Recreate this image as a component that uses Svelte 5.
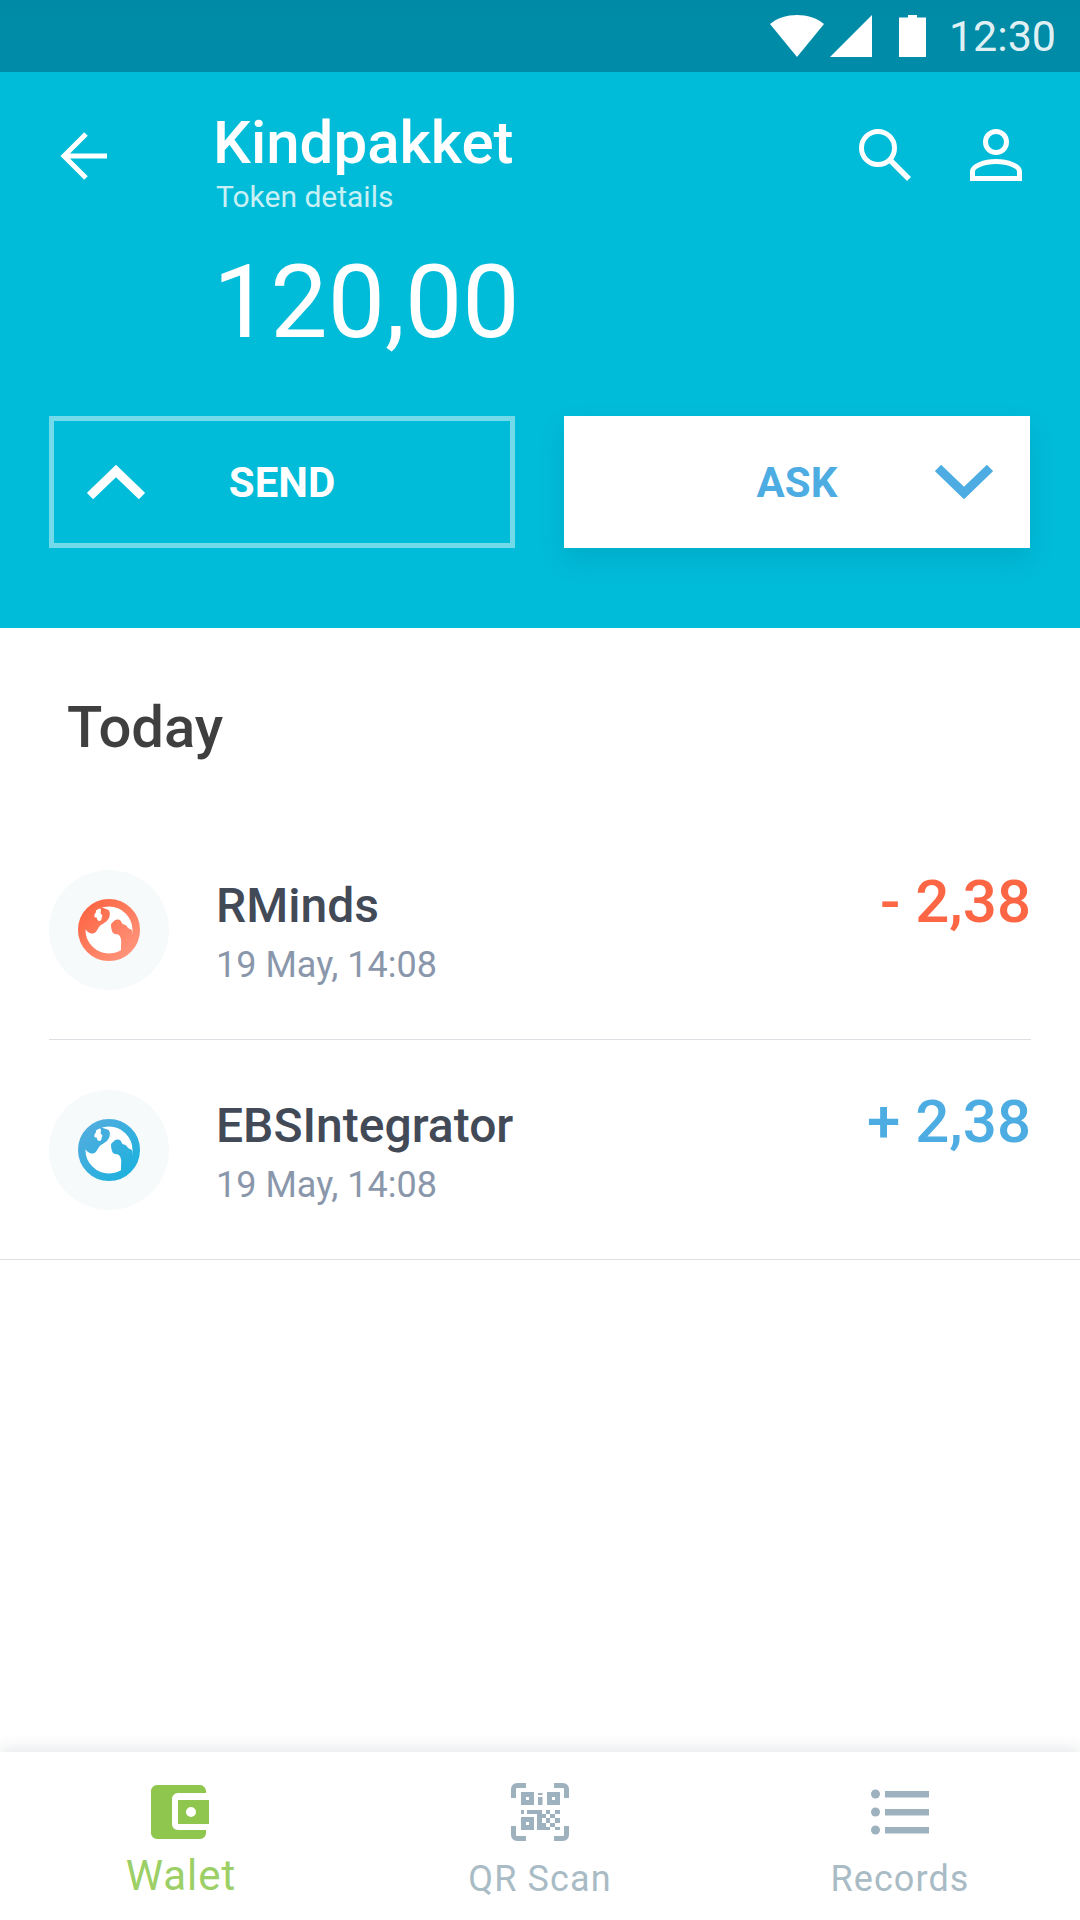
<script>
	const rows = [
		{ id: 'coral', name: 'RMinds', date: '19 May, 14:08', amount: '- 2,38', from: '#fc6644', to: '#ff937a', inset: true },
		{ id: 'blue', name: 'EBSIntegrator', date: '19 May, 14:08', amount: '+ 2,38', from: '#50addf', to: '#1fb1dd', inset: false }
	];

	// qr modules, x y w h
	const qrBits = [
		[27, 14, 4.500, 8], [27, 10, 4.500, 2],
		[10, 27, 3, 4], [16, 27, 15, 4], [35, 27, 4, 4], [44, 27, 5, 4],
		[26, 31, 9, 4], [39, 31, 5, 4],
		[26, 35, 5, 5], [35, 35, 4, 5], [44, 35, 5, 5],
		[26, 40, 9, 4], [39, 40, 5, 4],
		[26, 44, 13, 3], [44, 44, 5, 3]
	];
</script>

{#snippet globe(id, from, to)}
	<svg class="globe" viewBox="0 0 62 62">
		<defs>
			<linearGradient id="grad-{id}" gradientUnits="userSpaceOnUse" x1="8" y1="8" x2="52" y2="54">
				<stop offset="0" stop-color={from} />
				<stop offset="1" stop-color={to} />
			</linearGradient>
		</defs>
		<circle cx="31" cy="31" r="24" fill="#fff" />
		<path
			fill="url(#grad-{id})"
			d="M7 30C9 32 11 35 15 34.500C18 34 19 31 21 28C23 25 28 24 30 20.500C32 18 32.500 14 31 11.500C29 10 27 9.500 25 9L20 7L10 13L6 24Z"
		/>
		<path
			fill="#fff"
			d="M18.500 9.500C21 8.500 23.500 9.500 23 12C22 14 23 15 24.500 16.500L23.500 19C24 21.500 21.500 23 19.500 21C18.500 19 19.500 18.500 17.500 18.500C15.500 18 16.500 15 17.500 14C18.500 13 17.500 11 18.500 9.500Z"
		/>
		<path
			fill="url(#grad-{id})"
			d="M33 26.500C33 23.500 35 23.500 36 22C38 20 41 20 42.500 21.500C44 23.500 43.500 25 46 25.500C48 26 49 27 50 29C51 30 53 30 54 31.500L54 40L47 52L43 53L43 47C43.500 42 43.500 37.500 40 35.500C37 35 35 35 34 32C33.500 30 33 28 33 26.500Z"
		/>
		<circle cx="31" cy="31" r="27.250" fill="none" stroke="url(#grad-{id})" stroke-width="7.500" />
	</svg>
{/snippet}

<div class="screen">
	<header class="header">
		<div class="statusbar">
			<svg class="wifi" viewBox="0 0 54 42"><path d="M27 42L0 9C7 3 17 0 27 0C37 0 47 3 54 9Z" /></svg>
			<svg class="signal" viewBox="0 0 42 42"><path d="M0 42L42 0V42Z" /></svg>
			<svg class="battery" viewBox="0 0 27 42"><path d="M9 0H18V2.500H27V42H0V2.500H9Z" /></svg>
			<span class="time">12:30</span>
		</div>

		<div class="toolbar">
			<svg class="back" viewBox="0 0 47 48" fill="none" stroke="#fff" stroke-width="5">
				<path d="M47 24H4M26 2L4 24L26 46" />
			</svg>
			<div class="titles">
				<h1>Kindpakket</h1>
				<p>Token details</p>
			</div>
			<div class="actions">
				<svg class="search" viewBox="0 0 52 52" fill="none" stroke="#fff" stroke-width="5">
					<circle cx="19" cy="19" r="16.500" />
					<path d="M31 31L50 50" stroke-width="5.500" />
				</svg>
				<svg class="person" viewBox="0 0 52 52" fill="none" stroke="#fff" stroke-width="5">
					<circle cx="26" cy="13" r="10.500" />
					<path d="M2.500 49.500V42.500C2.500 37 14 32.500 26 32.500C38 32.500 49.500 37 49.500 42.500V49.500Z" />
				</svg>
			</div>
		</div>

		<div class="balance">120,00</div>

		<div class="buttons">
			<button class="btn send">
				<svg viewBox="0 0 58 34" fill="none" stroke="#fff" stroke-width="9"><path d="M3 31L29 6L55 31" /></svg>
				<span>SEND</span>
			</button>
			<button class="btn ask">
				<span>ASK</span>
				<svg viewBox="0 0 58 34" fill="none" stroke="#4dade2" stroke-width="9"><path d="M3 3L29 28L55 3" /></svg>
			</button>
		</div>
	</header>

	<main class="content">
		<h2>Today</h2>
		{#each rows as row}
			<div class="row" class:inset={row.inset}>
				<div class="avatar">
					{@render globe(row.id, row.from, row.to)}
				</div>
				<div class="info">
					<div class="name">{row.name}</div>
					<div class="date">{row.date}</div>
				</div>
				<div class="amount {row.id}">{row.amount}</div>
			</div>
		{/each}
	</main>

	<nav class="tabs">
		<div class="tab active">
			<svg viewBox="0 0 58 54">
				<path fill="#8fc64e" d="M6 0H49C52 0 55 3 55 6V8H27C23.500 8 21 11 21 14V39C21 42 23.500 45 27 45H55V48C55 51 52 54 49 54H6C3 54 0 51 0 48V6C0 3 3 0 6 0Z" />
				<path fill="#8fc64e" fill-rule="evenodd" d="M27 15H58V39H27ZM40 22A5 5 0 1 0 40 32A5 5 0 1 0 40 22Z" />
			</svg>
			<span>Walet</span>
		</div>
		<div class="tab">
			<svg viewBox="0 0 58 58" fill="#9db2be">
				<path fill="none" stroke="#9db2be" stroke-width="5" d="M2.500 15V6C2.500 4 4 2.500 6 2.500H15M43 2.500H52C54 2.500 55.500 4 55.500 6V15M2.500 43V52C2.500 54 4 55.500 6 55.500H15M43 55.500H52C54 55.500 55.500 54 55.500 52V43" />
				<path fill-rule="evenodd" d="M10 9H23V22H10ZM15 14V17H18V14ZM36 9H49V22H36ZM41 14V17H44V14ZM10 34H23V47H10ZM15 39V42H18V39Z" />
				{#each qrBits as b}
					<rect x={b[0]} y={b[1]} width={b[2]} height={b[3]} />
				{/each}
			</svg>
			<span>QR Scan</span>
		</div>
		<div class="tab">
			<svg viewBox="0 0 58 58" fill="#9db2be">
				<circle cx="4.500" cy="11" r="4.500" />
				<circle cx="4.500" cy="29" r="4.500" />
				<circle cx="4.500" cy="47" r="4.500" />
				<rect x="14" y="8" width="44" height="6.500" />
				<rect x="14" y="26" width="44" height="6.500" />
				<rect x="14" y="44" width="44" height="6.500" />
			</svg>
			<span>Records</span>
		</div>
	</nav>
</div>

<style>
	:global(body) {
		margin: 0;
		background: #fff;
	}

	.screen {
		width: 1080px;
		height: 1920px;
		display: flex;
		flex-direction: column;
		font-family: Roboto, 'Liberation Sans', sans-serif;
		overflow: hidden;
	}

	.header {
		height: 628px;
		flex-shrink: 0;
		background: #00bcd8;
		box-sizing: border-box;
	}

	.statusbar {
		height: 72px;
		background: linear-gradient(#008aa6, #008ca8);
		display: flex;
		align-items: flex-start;
		justify-content: flex-end;
		padding-right: 24px;
		box-sizing: border-box;
	}

	.statusbar svg {
		fill: #fff;
		margin-top: 15px;
	}

	.wifi {
		width: 54px;
		height: 42px;
	}

	.signal {
		width: 42px;
		height: 42px;
		margin-left: 6px;
	}

	.battery {
		width: 27px;
		height: 42px;
		margin-left: 27px;
	}

	.time {
		font-size: 43px;
		line-height: 72px;
		color: rgba(255, 255, 255, 0.9);
		margin-left: 23px;
	}

	.toolbar {
		display: flex;
		align-items: flex-start;
		padding: 41px 58px 0 60px;
	}

	.back {
		width: 47px;
		height: 48px;
		margin-top: 19px;
	}

	.titles {
		margin-left: 106px;
		flex: 1;
	}

	h1 {
		margin: 0;
		font-size: 60px;
		font-weight: 500;
		line-height: 60px;
		color: #fff;
	}

	.titles p {
		margin: 7px 0 0 3px;
		font-size: 30px;
		line-height: 34px;
		color: rgba(255, 255, 255, 0.8);
	}

	.actions {
		display: flex;
		gap: 59px;
		margin-top: 16px;
	}

	.search,
	.person {
		width: 52px;
		height: 52px;
	}

	.balance {
		margin: 27px 0 0 213px;
		font-size: 102px;
		line-height: 122px;
		color: #fff;
	}

	.buttons {
		display: flex;
		gap: 49px;
		padding: 0 0 0 49px;
		margin-top: 53px;
	}

	.btn {
		width: 466px;
		height: 132px;
		display: grid;
		grid-template-columns: 1fr auto 1fr;
		align-items: center;
		border: 0;
		padding: 0;
		background: none;
		font-family: inherit;
		font-size: 42px;
		font-weight: 700;
		box-sizing: border-box;
	}

	.btn svg {
		width: 58px;
		height: 34px;
	}

	.send {
		border: 5px solid rgba(255, 255, 255, 0.45);
		color: #fff;
		padding: 0 33px;
	}

	.ask {
		background: #fff;
		color: #4dade2;
		box-shadow: 0 12px 24px rgba(0, 80, 110, 0.14);
		padding: 0 37px;
	}

	.ask span {
		grid-column: 2;
	}

	.ask svg {
		grid-column: 3;
		justify-self: end;
	}

	.content {
		flex: 1;
	}

	h2 {
		margin: 0;
		padding: 65px 0 0 67px;
		height: 192px;
		box-sizing: border-box;
		font-size: 58px;
		font-weight: 500;
		line-height: 68px;
		color: #3f3f3f;
	}

	.row {
		height: 220px;
		display: flex;
		align-items: flex-start;
		border-bottom: 1px solid #dcdfe3;
		box-sizing: border-box;
		padding: 50px 49px 0;
	}

	.row.inset {
		margin: 0 49px;
		padding: 50px 0 0;
	}

	.avatar {
		width: 120px;
		height: 120px;
		border-radius: 50%;
		background: #f6fafb;
		display: flex;
		align-items: center;
		justify-content: center;
		flex-shrink: 0;
	}

	.globe {
		width: 62px;
		height: 62px;
	}

	.info {
		margin-left: 47px;
		flex: 1;
	}

	.name {
		font-size: 48px;
		font-weight: 500;
		line-height: 54px;
		color: #434a57;
		margin-top: 9px;
	}

	.date {
		font-size: 36px;
		line-height: 42px;
		color: #8a97ab;
		margin-top: 11px;
	}

	.amount {
		font-size: 60px;
		font-weight: 500;
		line-height: 64px;
	}

	.amount.coral {
		color: #fc6644;
	}

	.amount.blue {
		color: #4dade2;
	}

	.tabs {
		height: 168px;
		flex-shrink: 0;
		display: flex;
		background: #fff;
		box-shadow: 0 -4px 14px rgba(60, 70, 90, 0.12);
	}

	.tab {
		flex: 1;
		display: flex;
		flex-direction: column;
		align-items: center;
		color: #a9bbc5;
		font-size: 36px;
		letter-spacing: 1.100px;
		line-height: 42px;
	}

	.tab svg {
		width: 58px;
		height: 58px;
		margin-top: 31px;
	}

	.tab span {
		margin-top: 17px;
	}

	.tab.active {
		color: #9ccf66;
		font-size: 42px;
		letter-spacing: 1px;
	}

	.tab.active span {
		margin: 14px 0 0 2px;
	}
</style>
